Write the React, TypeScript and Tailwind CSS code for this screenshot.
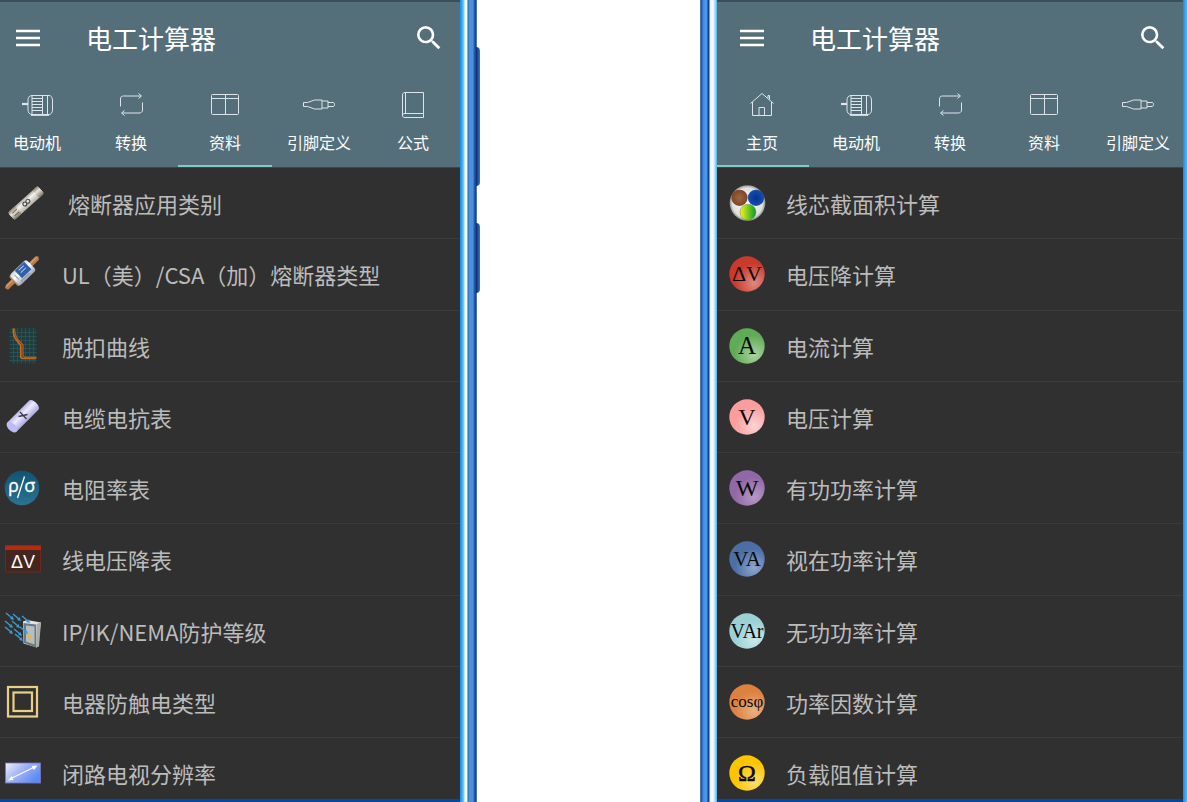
import React from 'react';
import clsx from 'clsx';

type IconName = 'home' | 'motor' | 'convert' | 'table' | 'plug' | 'book';

type Entry = { label: string; icon: React.ReactNode; indent?: boolean };

const TabIcon = ({ name }: { name: IconName }) => (
  <svg viewBox="0 0 32 32" className="w-8 h-8" fill="none" stroke="#dce5e9" strokeWidth="1" strokeLinejoin="round" aria-hidden="true">
    {name === 'home' && (
      <path d="M4.5 14.5 16 4.5 27.5 14.5M6.5 13v13.5h19V13M13 26.5v-8h5.5v8M22 9V6.500h1.500v4" />
    )}
    {name === 'motor' && (
      <>
        <path d="M1 15h6" strokeWidth="2.200" />
        <path d="M11 6.500h17c2 0 3.500 2 3.500 4.500v10c0 2.500-1.500 4.500-3.500 4.500H11c-2.500 0-4-2-4-4.500V11c0-2.500 1.500-4.500 4-4.500z" />
        <path d="M11 6.500v19M21.500 6.500v19M26.500 6.500v19M11 9.500h10.500M11 12.500h10.500M11 15.500h10.500M11 18.500h10.500M11 21.500h10.500" />
        <path d="M10 26h18" strokeWidth="1.800" />
      </>
    )}
    {name === 'convert' && (
      <path d="M5.500 17.500V10c0-2 1-3 3-3H26M23.500 4.500 26.500 7l-3 2.500M27.500 13.500V21c0 2-1.500 3-3.500 3H7M9.500 21.500 6.500 24l3 2.500" />
    )}
    {name === 'table' && (
      <>
        <rect x="2.500" y="5.500" width="27" height="20" rx="1" />
        <path d="M3 9.500h26.500M16.500 5.500v20" />
      </>
    )}
    {name === 'plug' && (
      <path d="M.5 13.500h4l7-2.500h7.500v9h-7.500l-7-2.500h-4zM19 12h6v7h-6M25 13.500h5.500c1.300 0 1.300 4 0 4H25" />
    )}
    {name === 'book' && (
      <path d="M8 3.500h18.500v21H8c-3.500 0-3.500 4 0 4h18.500v-4M8 3.500c-1.500 0-2.500 1-2.500 2.500v20.500M8.500 3.500v21" />
    )}
  </svg>
);

const Glyph = ({ children }: { children: React.ReactNode }) => (
  <svg viewBox="0 0 36 36" className="w-9 h-9 shrink-0 overflow-visible" aria-hidden="true">
    {children}
  </svg>
);

// Round badge with a soft highlight at the lower right
const Badge = ({ id, color, shine, children }: { id: string; color: string; shine: string; children: React.ReactNode }) => (
  <Glyph>
    <defs>
      <radialGradient id={id} cx="0.7" cy="0.75" r="0.55">
        <stop offset="0" stopColor={shine} />
        <stop offset="1" stopColor={color} />
      </radialGradient>
    </defs>
    <circle cx="18" cy="18" r="17.700" fill={`url(#${id})`} />
    <g fill="#0a0a0a" textAnchor="middle" className="font-['Liberation_Serif',serif]">
      {children}
    </g>
  </Glyph>
);

const FuseIcon = () => (
  <Glyph>
    <defs>
      <linearGradient id="glass" x1="0" y1="0" x2="0" y2="1">
        <stop offset="0" stopColor="#aaa69e" />
        <stop offset="0.35" stopColor="#f5f4f0" />
        <stop offset="1" stopColor="#b3ada3" />
      </linearGradient>
      <linearGradient id="cap" x1="0" y1="0" x2="0" y2="1">
        <stop offset="0" stopColor="#8d8577" />
        <stop offset="0.4" stopColor="#e9e4da" />
        <stop offset="1" stopColor="#7f7668" />
      </linearGradient>
    </defs>
    <g transform="translate(21 18) rotate(-42)">
      <rect x="-20" y="-5" width="40" height="10" rx="2" fill="url(#glass)" />
      <rect x="-20" y="-5" width="10" height="10" rx="2" fill="url(#cap)" />
      <rect x="13" y="-5" width="7" height="10" rx="2" fill="url(#cap)" />
      <path d="M-17-1.500h6M-17 2h6" stroke="#6f675a" strokeWidth="1" />
      <circle cx="-1.500" cy="0" r="2" fill="none" stroke="#444" strokeWidth="1.200" />
      <circle cx="2.500" cy="0" r="2" fill="none" stroke="#555" strokeWidth="1.200" />
    </g>
  </Glyph>
);

const CartridgeIcon = () => (
  <Glyph>
    <defs>
      <linearGradient id="body" x1="0" y1="0" x2="0" y2="1">
        <stop offset="0" stopColor="#c9d1df" />
        <stop offset="0.4" stopColor="#ffffff" />
        <stop offset="1" stopColor="#9ea2ad" />
      </linearGradient>
    </defs>
    <g transform="translate(17.500 17) rotate(-44)">
      <path d="M-23-1.500-20-3h10v5h-12zM10-3h11l2 2-2 3H10z" fill="#b87a4a" />
      <path d="M-21-1.500h10M11-1.500h10" stroke="#dfab7c" strokeWidth="1" />
      <rect x="-12.500" y="-7" width="4" height="14" rx="2" fill="#c08a60" />
      <rect x="-11" y="-7.500" width="23" height="15" rx="2.500" fill="url(#body)" />
      <rect x="-4" y="-7" width="13" height="10.500" fill="#2f5fad" />
      <path d="M-1-4.500h7M-1-1.500h7" stroke="#b7cdf0" strokeWidth="1" />
      <path d="M-7 5H5M-7-4v6" stroke="#8292b4" strokeWidth="1" />
    </g>
  </Glyph>
);

const CurveIcon = () => (
  <Glyph>
    <rect x="4.500" y="0" width="27" height="35.500" fill="#203a3d" />
    <path
      d="M8.500 0v35.500M12.500 0v35.500M16.500 0v35.500M20.500 0v35.500M24.500 0v35.500M28.500 0v35.500M4.500 4.500h27M4.500 8.500h27M4.500 12.500h27M4.500 16.500h27M4.500 20.500h27M4.500 24.500h27M4.500 28.500h27M4.500 32.500h27"
      stroke="#2f5557"
      strokeWidth="0.800"
    />
    <path d="M8.200.5c0 5 .8 8 2.500 10.500l5 6.500v12l2 1h13.500" fill="none" stroke="#cb6a20" strokeWidth="1.600" />
    <path d="M9.500.5c.5 7 1.500 8.500 3.500 11l5 5.500v11l2 1.500h11.500" fill="none" stroke="#b05c1f" strokeWidth="1.300" />
  </Glyph>
);

const CableIcon = () => (
  <Glyph>
    <defs>
      <linearGradient id="tube" x1="0" y1="0" x2="0" y2="1">
        <stop offset="0" stopColor="#b9b6ee" />
        <stop offset="0.4" stopColor="#eceaff" />
        <stop offset="1" stopColor="#aaa8df" />
      </linearGradient>
    </defs>
    <g transform="translate(17.500 17.500) rotate(-45)">
      <path d="M-15-6.500h31c4.500 0 4.500 13 0 13h-31z" fill="url(#tube)" />
      <ellipse cx="-15" cy="0" rx="3.800" ry="6.500" fill="#bdbbf5" />
    </g>
    <path d="m15 13 6.500 7M22.500 15.500l-9 2" stroke="#3b3b48" strokeWidth="1.300" />
  </Glyph>
);

const RhoSigmaIcon = () => (
  <Glyph>
    <defs>
      <linearGradient id="teal" x1="0" y1="0" x2="0" y2="1">
        <stop offset="0" stopColor="#0f5573" />
        <stop offset="1" stopColor="#2b7391" />
      </linearGradient>
    </defs>
    <circle cx="17" cy="18" r="17.300" fill="url(#teal)" />
    <path d="M19.500 6.500 12.500 28" stroke="#fff" strokeWidth="1.300" />
    <g fill="#fff" stroke="#fff" strokeWidth="0.300" fontSize="18" textAnchor="middle" className="font-['Open_Sans',sans-serif]">
      <text x="8.500" y="21.500">ρ</text>
      <text x="24.800" y="21.500">σ</text>
    </g>
  </Glyph>
);

const LineDropIcon = () => (
  <Glyph>
    <rect x="0.500" y="5" width="35" height="26" rx="1" fill="#44261f" stroke="#6b2a1c" />
    <path d="M0 4.500h36v4.500H0z" fill="#b22c12" />
    <text x="18" y="26.500" fill="#fff" fontSize="18" textAnchor="middle" className="font-['Liberation_Sans',sans-serif]">ΔV</text>
  </Glyph>
);

const EnclosureIcon = () => (
  <Glyph>
    <path d="M18 8.500 22 7l14 2.500-4 25-13.500-4z" fill="#e2e3df" />
    <path d="m31.500 11 4.500-1.500-2 24-3 1z" fill="#a9aca8" />
    <path d="M18.500 10 31 11.500v23l-12-4.500z" fill="#6f7880" />
    <path d="M21 12.500 29.500 13.500v18L21 28.500z" fill="#b5bec4" />
    <path d="m23.500 21 3 3-1 1.500 3 4-5-3.500 1-1.500-2.500-2z" fill="#f0b52d" />
    <g stroke="#3f9ad2" strokeWidth="1.400" fill="#3f9ad2">
      {['translate(1 0)', 'translate(8 1)', 'translate(17 3)', 'translate(0 8)', 'translate(7 8)', 'translate(0 14)', 'translate(9 16)', 'translate(10 21)', 'translate(15 14)'].map((t) => (
        <g key={t} transform={t}>
          <path d="m0 0 6 5" />
          <path d="m8 7-4-1 2.500-3z" stroke="none" />
        </g>
      ))}
    </g>
  </Glyph>
);

const ClassTwoIcon = () => (
  <Glyph>
    <rect x="3" y="3" width="29" height="29.500" fill="none" stroke="#e9cf86" strokeWidth="2.200" />
    <rect x="8.500" y="8.500" width="18.500" height="18.500" fill="none" stroke="#e9cf86" strokeWidth="2.200" />
  </Glyph>
);

const ResolutionIcon = () => (
  <Glyph>
    <defs>
      <linearGradient id="screen" x1="0" y1="0" x2="1" y2="0.600">
        <stop offset="0" stopColor="#efeffe" />
        <stop offset="0.500" stopColor="#a0b3f6" />
        <stop offset="1" stopColor="#5b8bf5" />
      </linearGradient>
    </defs>
    <rect x="0.500" y="8" width="35" height="20" fill="url(#screen)" stroke="#7a74c4" strokeWidth="0.800" />
    <path d="M6 23.500 29.500 12" stroke="#fff" strokeWidth="1.200" />
    <path d="m3 25.500 3.500-4.500 2 4zM32.500 10.500l-6 .5 2.500 4z" fill="#fff" />
  </Glyph>
);

const CoresIcon = () => (
  <Glyph>
    <defs>
      <radialGradient id="sheath">
        <stop offset="0" stopColor="#ffffff" />
        <stop offset="0.850" stopColor="#e0e0e0" />
        <stop offset="1" stopColor="#8e8e8e" />
      </radialGradient>
      <radialGradient id="brown">
        <stop offset="0" stopColor="#a2653d" />
        <stop offset="1" stopColor="#7d4528" />
      </radialGradient>
      <radialGradient id="blue">
        <stop offset="0" stopColor="#0a2f93" />
        <stop offset="1" stopColor="#1450ab" />
      </radialGradient>
      <linearGradient id="earth">
        <stop offset="0.100" stopColor="#e0ee17" />
        <stop offset="0.900" stopColor="#1ba52e" />
      </linearGradient>
    </defs>
    <circle cx="18.500" cy="18" r="17.800" fill="url(#sheath)" />
    <circle cx="10.500" cy="12.800" r="8.100" fill="url(#brown)" />
    <circle cx="27" cy="12.800" r="8.100" fill="url(#blue)" />
    <circle cx="19" cy="27.200" r="8" fill="url(#earth)" stroke="#5f8f3a" strokeWidth="0.500" />
  </Glyph>
);

const dataEntries: Entry[] = [
  { label: '熔断器应用类别', icon: <FuseIcon />, indent: true },
  { label: 'UL（美）/CSA（加）熔断器类型', icon: <CartridgeIcon /> },
  { label: '脱扣曲线', icon: <CurveIcon /> },
  { label: '电缆电抗表', icon: <CableIcon /> },
  { label: '电阻率表', icon: <RhoSigmaIcon /> },
  { label: '线电压降表', icon: <LineDropIcon /> },
  { label: 'IP/IK/NEMA防护等级', icon: <EnclosureIcon /> },
  { label: '电器防触电类型', icon: <ClassTwoIcon /> },
  { label: '闭路电视分辨率', icon: <ResolutionIcon /> },
];

const homeEntries: Entry[] = [
  { label: '线芯截面积计算', icon: <CoresIcon /> },
  { label: '电压降计算', icon: <Badge id="drop" color="#c93a2d" shine="#e08a80"><text x="18" y="25" fontSize="22">ΔV</text></Badge> },
  { label: '电流计算', icon: <Badge id="amp" color="#5fac56" shine="#a9d3a0"><text x="18" y="25.500" fontSize="25">A</text></Badge> },
  { label: '电压计算', icon: <Badge id="volt" color="#fb9d9d" shine="#fdd3d3"><text x="18" y="26" fontSize="24">V</text></Badge> },
  { label: '有功功率计算', icon: <Badge id="watt" color="#9168a6" shine="#b599c4"><text x="18" y="26" fontSize="24">W</text></Badge> },
  { label: '视在功率计算', icon: <Badge id="va" color="#4b6ea5" shine="#8ea6cc"><text x="18" y="25" fontSize="21">VA</text></Badge> },
  { label: '无功功率计算', icon: <Badge id="var" color="#9bd0d5" shine="#c9e7ea"><text x="18" y="24.500" fontSize="20">VAr</text></Badge> },
  { label: '功率因数计算', icon: <Badge id="cos" color="#dd813f" shine="#eab184"><text x="18" y="22.500" fontSize="17">cosφ</text></Badge> },
  { label: '负载阻值计算', icon: <Badge id="ohm" color="#fdc500" shine="#fedf6b"><text x="18" y="26" fontSize="24" stroke="#0a0a0a" strokeWidth="0.500">Ω</text></Badge> },
];

const homeTab = { name: 'home' as IconName, label: '主页' };
const commonTabs: { name: IconName; label: string }[] = [
  { name: 'motor', label: '电动机' },
  { name: 'convert', label: '转换' },
  { name: 'table', label: '资料' },
  { name: 'plug', label: '引脚定义' },
];
const bookTab = { name: 'book' as IconName, label: '公式' };

const Screen = ({ tabs, active, entries, side }: {
  tabs: { name: IconName; label: string }[];
  active: string;
  entries: Entry[];
  side: 'left' | 'right';
}) => (
  <section className="flex-1 min-w-0 flex flex-col bg-[#303030] overflow-hidden">
    <header className="bg-[#546e7a] border-t-2 border-[#3a4f58]">
      <div className={clsx('h-[72px] flex items-center text-white', side === 'left' ? 'pl-4 pr-[15px]' : 'pl-[23px] pr-[14px]')}>
        <button type="button" aria-label="菜单" className="mr-[46px]">
          <svg viewBox="0 0 24 18" className="w-6 h-[18px] block" stroke="currentColor" strokeWidth="2.400" aria-hidden="true">
            <path d="M0 2h24M0 9h24M0 16h24" />
          </svg>
        </button>
        <h1 className="flex-1 text-[26px] leading-8 whitespace-nowrap">电工计算器</h1>
        <button type="button" aria-label="搜索">
          <svg viewBox="0 0 24 24" className="w-8 h-8 block" fill="currentColor" aria-hidden="true">
            <path d="M15.500 14h-.79l-.28-.27A6.470 6.470 0 0 0 16 9.500 6.500 6.500 0 1 0 9.500 16c1.610 0 3.090-.59 4.230-1.570l.27.28v.79l5 4.990L20.490 19l-4.990-5zm-6 0C7.010 14 5 11.990 5 9.500S7.010 5 9.500 5 14 7.010 14 9.500 11.990 14 9.500 14z" />
          </svg>
        </button>
      </div>
      <nav className={clsx('flex overflow-hidden', side === 'left' ? 'justify-end' : 'justify-center')}>
        {tabs.map((tab) => (
          <button
            key={tab.label}
            type="button"
            className={clsx(
              'w-[94px] h-[93px] shrink-0 flex flex-col items-center pt-[15px] gap-[11px] text-white border-b-2',
              tab.label === active ? 'border-[#80cbc4]' : 'border-transparent'
            )}
          >
            <TabIcon name={tab.name} />
            <span className="text-base leading-5 whitespace-nowrap">{tab.label}</span>
          </button>
        ))}
      </nav>
    </header>
    <ul className="flex-1 grid grid-rows-[repeat(8,minmax(71px,1fr))_61px] border-t border-[#3b474c]">
      {entries.map((entry) => (
        <li key={entry.label} className="border-b border-[#3b3b3b] last:border-b-0 overflow-hidden">
          <a
            href="#"
            className={clsx(
              'h-full min-h-[70px] flex items-center whitespace-nowrap text-[22px] leading-7 text-[#bcbcbc]',
              side === 'left' ? 'pl-[5px]' : 'pl-3',
              entry.indent ? 'gap-[27px]' : 'gap-[21px]'
            )}
          >
            {entry.icon}
            <span>{entry.label}</span>
          </a>
        </li>
      ))}
    </ul>
    <div className="h-[3px] bg-[#0048a6]" />
  </section>
);

export default function App() {
  return (
    <main className="min-h-screen grid grid-cols-[477fr_223fr_487fr] bg-white font-['Noto_Sans_CJK_SC',sans-serif]">
      <div className="flex relative min-w-0">
        <Screen side="left" tabs={[...commonTabs, bookTab]} active="资料" entries={dataEntries} />
        <div className="w-[17px] shrink-0 bg-[linear-gradient(to_right,#1b8ee0_0px,#35a8f4_2px,#8fd0f8_4px,#f4fbff_5px,#f4fbff_7px,#2c5c9c_8px,#4a92e0_9px,#4a92e0_13px,#2a62b4_14px,#173f80_16px,#8fa6cc_17px)]" />
        {/* volume and power keys */}
        <div className="absolute left-full -ml-px top-[47px] w-1 h-[139px] rounded-r-sm bg-linear-to-r from-[#0c2c66] to-[#3a78cc]" />
        <div className="absolute left-full -ml-px top-[223px] w-1 h-[70px] rounded-r-sm bg-linear-to-r from-[#0c2c66] to-[#3a78cc]" />
      </div>
      <div className="col-start-3 flex min-w-0">
        <div className="w-[17px] shrink-0 bg-[linear-gradient(to_right,#8fa6cc_0px,#16407f_1px,#2f6fc4_2px,#4696ea_4px,#4696ea_7px,#173f80_8px,#173f80_9px,#e6f1fb_10px,#f6fbff_13px,#a5ddf8_15px,#5aaede_17px)]" />
        <Screen side="right" tabs={[homeTab, ...commonTabs]} active="主页" entries={homeEntries} />
        <div className="w-1 shrink-0 bg-linear-to-r from-[#1a86e0] to-[#5cb8fa]" />
      </div>
    </main>
  );
}
